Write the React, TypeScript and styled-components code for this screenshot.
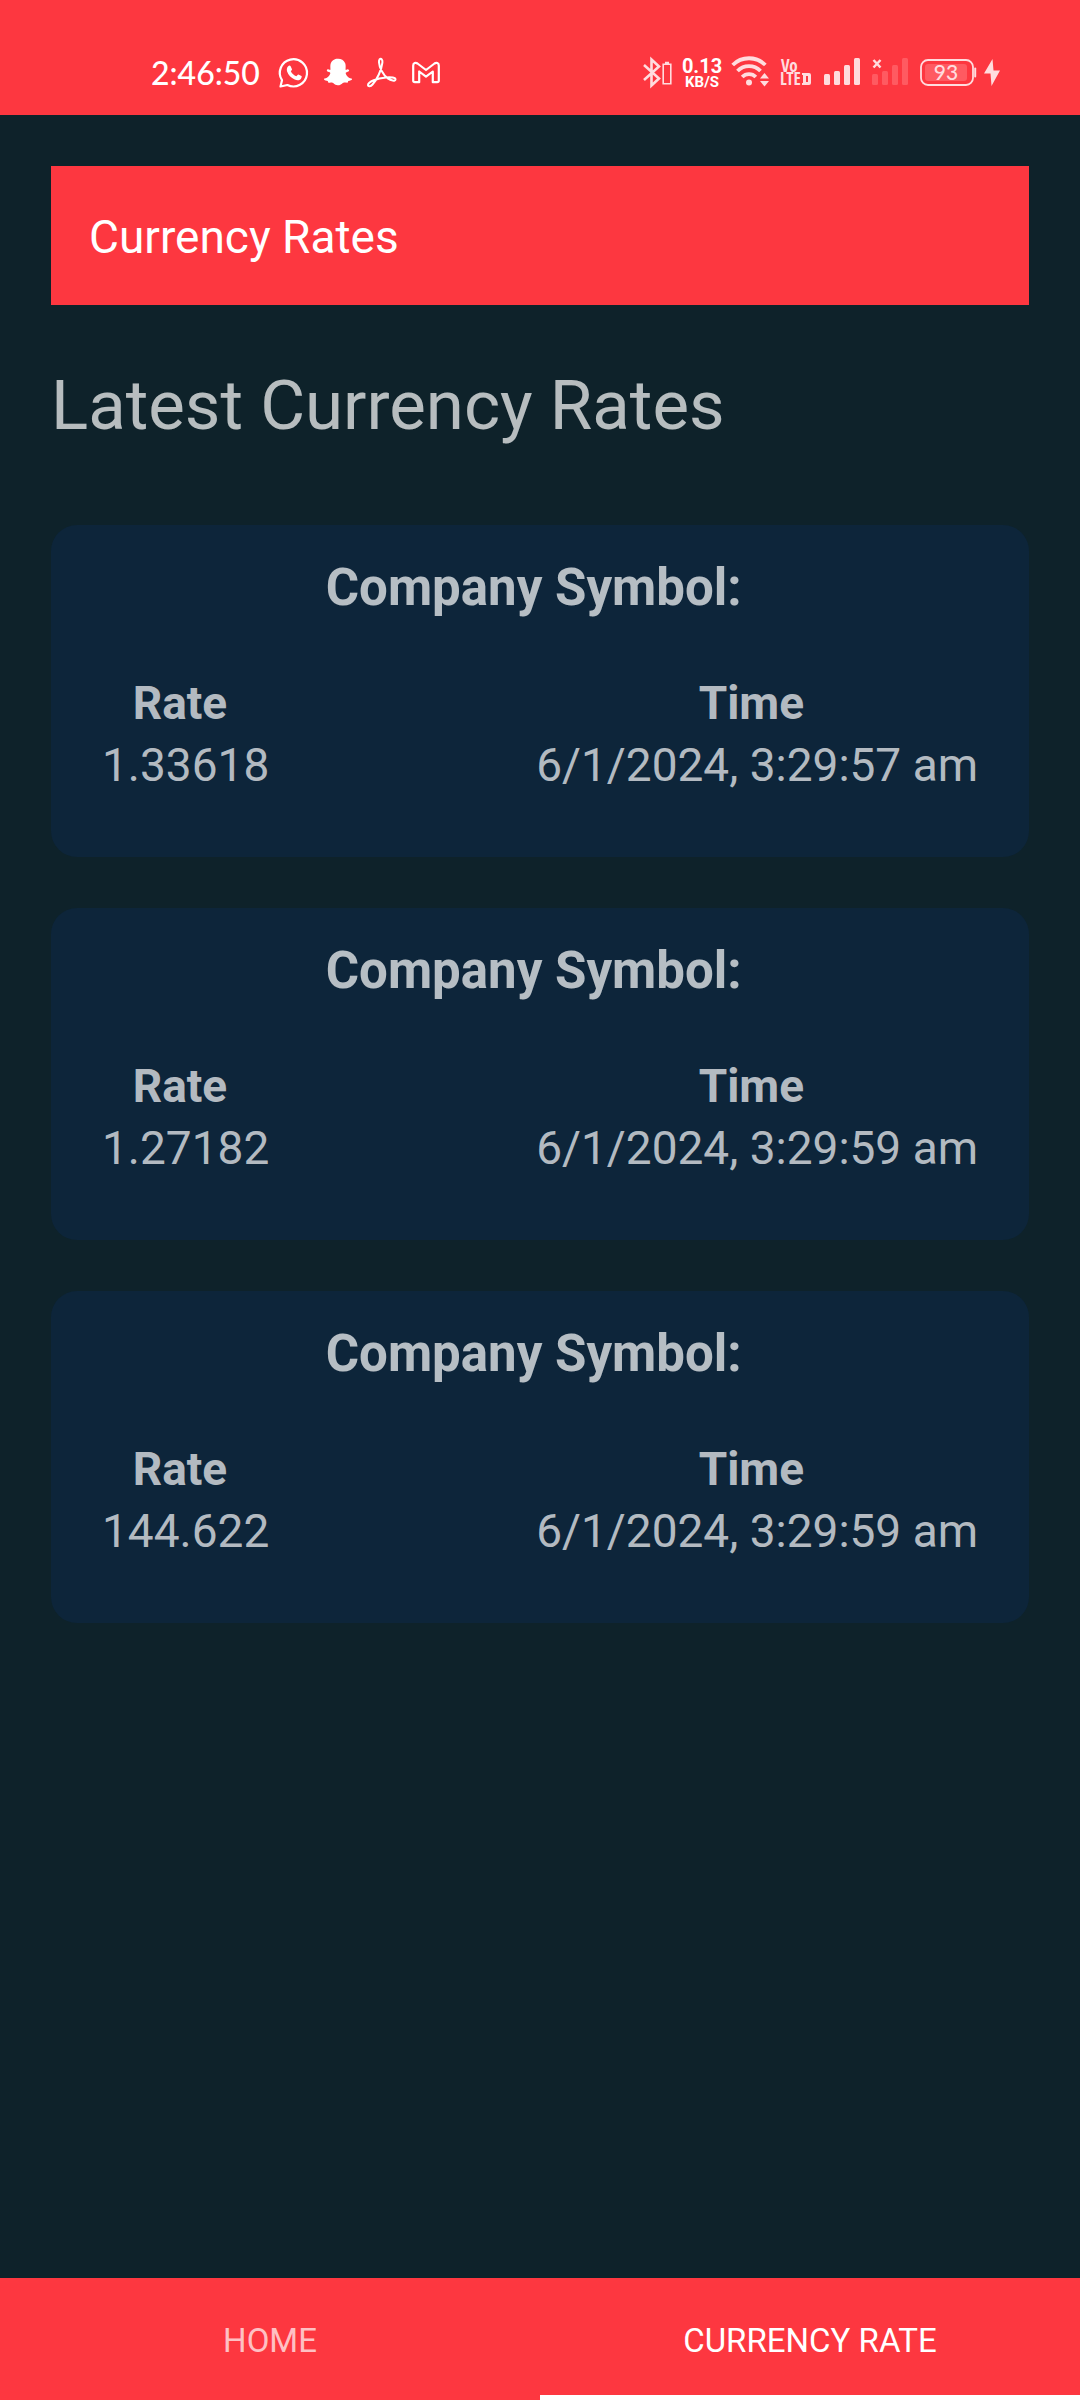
import React, { useState } from "react";
import styled, { createGlobalStyle } from "styled-components";
import { FaSnapchatGhost } from "react-icons/fa";

const GlobalStyle = createGlobalStyle`
  * { box-sizing: border-box; }
  body {
    margin: 0;
    background: #0e222a;
    font-family: Roboto, "Liberation Sans", sans-serif;
  }
`;

const RED = "#fd3740";
const MUTED = "rgba(255, 255, 255, 0.7)";
const TINT = "#ffdcde";

const Screen = styled.div`
  display: flex;
  flex-direction: column;
  min-height: 100vh;
`;

const StatusBar = styled.div`
  display: flex;
  justify-content: space-between;
  padding: 56px 80px 27px 151px;
  background: ${RED};
  color: #fff;
`;

const StatusGroup = styled.div<{ $gap: number }>`
  display: flex;
  align-items: center;
  gap: ${(p) => p.$gap}px;
  height: 32px;
`;

const Clock = styled.time`
  margin-right: 4px;
  padding-top: 2px;
  font: 500 32px/32px Lato, sans-serif;
`;

const Glyph = styled.svg`
  display: block;
  flex: none;
  overflow: visible;
`;

const Speed = styled.div`
  display: flex;
  flex-direction: column;
  align-items: center;
  width: 36px;
  padding-top: 2px;
  font-weight: 700;
  font-size: 15px;
  line-height: 14px;
  white-space: nowrap;
`;

const SpeedValue = styled.span`
  font-size: 20px;
  line-height: 18px;
`;

const Main = styled.main`
  flex: 1;
  padding: 51px;
`;

const TitleBar = styled.header`
  padding: 40px 38px 36px;
  background: ${RED};
  color: #fff;
  font-size: 46px;
  line-height: 63px;
`;

const Heading = styled.h1`
  margin: 61px 0 79px;
  color: ${MUTED};
  font-weight: 400;
  font-size: 69px;
  line-height: 80px;
`;

const CardList = styled.div`
  display: flex;
  flex-direction: column;
  gap: 51px;
`;

const Card = styled.section`
  padding: 33px 51px 61px;
  border-radius: 26px;
  background: #0d253a;
  color: ${MUTED};
`;

const CardTitle = styled.h2`
  margin: 0 0 54px;
  font-weight: 700;
  font-size: 51px;
  line-height: 60px;
  text-align: center;
  white-space: pre;
`;

const Facts = styled.dl`
  display: flex;
  justify-content: space-between;
  margin: 0;
  font-size: 46px;
  line-height: 62px;
  text-align: center;
  white-space: pre;
`;

const FactName = styled.dt`
  font-weight: 700;
`;

const FactValue = styled.dd`
  margin: 0;
`;

const TabBar = styled.nav`
  display: flex;
  background: ${RED};
`;

const Tab = styled.button<{ $active: boolean }>`
  flex: 1;
  padding: 42px 0 34px;
  border: 0;
  border-bottom: 5px solid ${(p) => (p.$active ? "#fff" : "transparent")};
  background: none;
  color: ${(p) => (p.$active ? "#fff" : MUTED)};
  font-family: inherit;
  font-size: 33px;
  line-height: 41px;
  text-transform: uppercase;
`;

const WhatsappIcon = () => (
  <Glyph width="30" height="32" viewBox="0 0 30 32" fill="none">
    <path
      d="M1.500 30.500 3 24.200A13.600 13.600 0 1 1 8.400 29Z"
      stroke="#fff"
      strokeWidth="2.2"
      strokeLinejoin="round"
    />
    <path
      d="M9.2 10.2c.7-.8 1.8-.9 2.3-.1l1.5 3.1c.2.6-.9 1.7-1.2 2.1 1.2 2.5 3.2 4.1 5.6 5 .5-.4 1.4-1.9 2-1.8l3.1 1.6c.6.4 0 2.1-.6 2.8-1.7 1.7-4 1.5-6.2.6-3.6-1.5-6.5-4.5-7.6-7.9-.6-2.2-.3-4 1.1-5.4Z"
      fill="#fff"
    />
  </Glyph>
);

const AcrobatIcon = () => (
  <Glyph width="30" height="32" viewBox="0 0 30 32" fill="none">
    <path
      d="M12.500 3.500c1.700-1.800 3.300.2 2.900 3.200C14.600 14 10 23.500 5.500 28.500c-1.800 2-4.600 2.400-4.500.5.200-3.300 9-6.800 18-7.600 5.500-.5 9.600.2 9.500 2-.2 2.200-4.700 1.200-7.700-1C16 19 12.300 11.500 12 6.500c-.1-1.200 0-2.300.5-3Z"
      stroke="#fff"
      strokeWidth="2"
    />
  </Glyph>
);

const GmailIcon = () => (
  <Glyph width="28" height="32" viewBox="0 0 28 32" fill="none">
    <path
      d="M1.200 9.500c0-2.700 2.500-3.300 4.300-2L14 14l8.500-6.500c1.800-1.300 4.300-.7 4.300 2v15c0 1-.7 1.700-1.700 1.700h-4.300V15.500L14 20.700l-6.800-5.200v10.700H2.900c-1 0-1.700-.7-1.700-1.700Z"
      stroke="#fff"
      strokeWidth="2.200"
      strokeLinejoin="round"
    />
  </Glyph>
);

const BluetoothIcon = () => (
  <Glyph width="29" height="32" viewBox="0 0 29 32" fill="none" stroke={TINT}>
    <path d="m1 9 15 13.500-7.500 7V3.500l7.500 7L1 24" strokeWidth="2.600" />
    <path d="M20.200 8.200h7.600v19.600h-7.600zM22 6.600h4" strokeWidth="1.600" />
  </Glyph>
);

const WifiIcon = () => (
  <Glyph width="37" height="32" viewBox="0 0 37 32" fill="none">
    <g stroke={TINT} strokeWidth="3.800">
      <path d="M.7 9a23 23 0 0 1 32.600 0" />
      <path d="M5.500 15a16.200 16.200 0 0 1 23 0" />
      <path d="M10.200 21a9.600 9.600 0 0 1 13.600 0" />
    </g>
    <circle cx="17" cy="26.500" r="3" fill={TINT} />
    <path d="M28 22.500 32.500 17l4.500 5.500ZM28 25h9l-4.500 5.500Z" fill={TINT} />
  </Glyph>
);

const VolteIcon = () => (
  <Glyph width="31" height="32" viewBox="0 0 31 32" fill={TINT}>
    <g fontFamily="'Liberation Sans Narrow', 'Open Sans Condensed', Roboto, sans-serif" fontWeight="700">
      <text x="0" y="16" fontSize="17">Vo</text>
      <text x="-1" y="29" fontSize="17">LTE</text>
    </g>
    <path
      fillRule="evenodd"
      d="M21 17h7q2 0 2 2v8q0 2-2 2h-7v-2h1v-8h-1Zm4 3v6h2v-6Z"
    />
  </Glyph>
);

const BARS = [
  { x: 0, y: 18, h: 11 },
  { x: 10, y: 15, h: 14 },
  { x: 20, y: 9, h: 20 },
  { x: 30, y: 2, h: 27 },
];

const SignalIcon = ({ empty = false }: { empty?: boolean }) => (
  <Glyph width="36" height="32" viewBox="0 0 36 32">
    {BARS.map((b) => (
      <rect
        key={b.x}
        x={b.x}
        y={b.y}
        width="6"
        height={b.h}
        rx="1.500"
        fill={empty ? "#ff5a61" : TINT}
      />
    ))}
    {empty && <path d="m1.500 4 7 7.500m0-7.500-7 7.500" stroke={TINT} strokeWidth="2.500" />}
  </Glyph>
);

const BatteryIcon = () => (
  <Glyph width="80" height="32" viewBox="0 0 80 32">
    <rect x="1" y="4" width="52" height="25" rx="7" fill="none" stroke={TINT} strokeWidth="1.800" />
    <rect x="5" y="8" width="42" height="17" rx="3" fill="#ff5a61" />
    <path d="M55.200 12.500v8" stroke={TINT} strokeWidth="2" strokeLinecap="round" />
    <text x="26" y="24" fontFamily="Lato, sans-serif" fontSize="21" fontWeight="500" textAnchor="middle" fill={TINT}>
      93
    </text>
    <path d="M72.500 3 64 17.500h6.500L71.500 30 80 14.500h-6.500Z" fill={TINT} />
  </Glyph>
);

const RATES = [
  { rate: "1.33618", time: "6/1/2024, 3:29:57 am" },
  { rate: "1.27182", time: "6/1/2024, 3:29:59 am" },
  { rate: "144.622", time: "6/1/2024, 3:29:59 am" },
];

const TABS = ["Home", "Currency Rate"];

export default function App() {
  const [tab, setTab] = useState("Currency Rate");
  return (
    <Screen>
      <GlobalStyle />
      <StatusBar>
        <StatusGroup $gap={15}>
          <Clock>2:46:50</Clock>
          <WhatsappIcon />
          <FaSnapchatGhost size={28} />
          <AcrobatIcon />
          <GmailIcon />
        </StatusGroup>
        <StatusGroup $gap={12}>
          <BluetoothIcon />
          <Speed>
            <SpeedValue>0.13</SpeedValue>
            <span>KB/S</span>
          </Speed>
          <WifiIcon />
          <VolteIcon />
          <SignalIcon />
          <SignalIcon empty />
          <BatteryIcon />
        </StatusGroup>
      </StatusBar>
      <Main>
        <TitleBar>Currency Rates</TitleBar>
        <Heading>Latest Currency Rates</Heading>
        <CardList>
          {RATES.map((r) => (
            <Card key={r.rate}>
              <CardTitle>{"Company Symbol: "}</CardTitle>
              <Facts>
                <div>
                  <FactName>{"Rate "}</FactName>
                  <FactValue>{r.rate}</FactValue>
                </div>
                <div>
                  <FactName>{"Time "}</FactName>
                  <FactValue>{r.time}</FactValue>
                </div>
              </Facts>
            </Card>
          ))}
        </CardList>
      </Main>
      <TabBar>
        {TABS.map((t) => (
          <Tab key={t} type="button" $active={t === tab} onClick={() => setTab(t)}>
            {t}
          </Tab>
        ))}
      </TabBar>
    </Screen>
  );
}
